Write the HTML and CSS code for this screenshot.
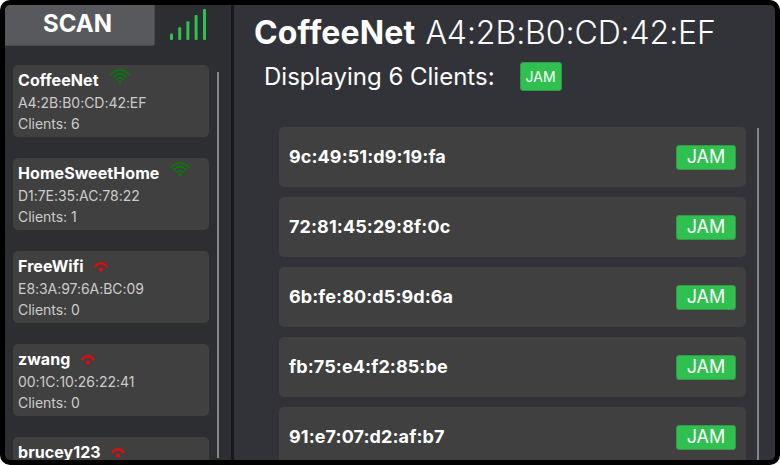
FILE: index.html
```html
<!DOCTYPE html>
<html lang="en">
<head>
<meta charset="utf-8">
<title>Wifi scanner</title>
<link rel="stylesheet" href="styles.css">
</head>
<body>
<svg class="defs" width="0" height="0">
  <symbol id="wifi-strong" viewBox="0 0 20 15">
    <g fill="none" stroke="currentColor" stroke-width="1.5">
      <path d="M.5 6.200C5.500-.8 14.500-.8 19.500 6.200"/>
      <path d="M3.500 8.600C7 3.600 13 3.600 16.500 8.600"/>
      <path d="M6.300 11C8.200 8 11.800 8 13.700 11"/>
    </g>
    <circle cx="10" cy="12.800" r="1.500" fill="currentColor"/>
  </symbol>
  <symbol id="wifi-weak" viewBox="0 0 14 10">
    <path d="M.8 5.100C4-.2 10-.2 13.200 5.100" fill="none" stroke="currentColor" stroke-width="2"/>
    <circle cx="7" cy="7.600" r="2" fill="currentColor"/>
  </symbol>
</svg>
<div class="window">
  <aside class="sidebar">
    <header class="toolbar">
      <button class="scan">SCAN</button>
      <svg class="signal" width="37" height="32" viewBox="0 0 37 32" fill="#2fc04f">
        <rect x="0" y="24.500" width="3" height="6.500" rx="1"/>
        <rect x="8.200" y="18.300" width="3" height="12.700" rx="1"/>
        <rect x="16.400" y="12.300" width="3" height="18.700" rx="1"/>
        <rect x="24.600" y="6" width="3" height="25" rx="1"/>
        <rect x="33" y="0" width="3" height="31" rx="1"/>
      </svg>
    </header>
    <div class="networks">
      <div class="network">
        <div class="name">CoffeeNet<svg class="strong"><use href="#wifi-strong"/></svg></div>
        <div>A4:2B:B0:CD:42:EF</div><div>Clients: 6</div>
      </div>
      <div class="network">
        <div class="name">HomeSweetHome<svg class="strong"><use href="#wifi-strong"/></svg></div>
        <div>D1:7E:35:AC:78:22</div><div>Clients: 1</div>
      </div>
      <div class="network">
        <div class="name">FreeWifi<svg class="weak"><use href="#wifi-weak"/></svg></div>
        <div>E8:3A:97:6A:BC:09</div><div>Clients: 0</div>
      </div>
      <div class="network">
        <div class="name">zwang<svg class="weak"><use href="#wifi-weak"/></svg></div>
        <div>00:1C:10:26:22:41</div><div>Clients: 0</div>
      </div>
      <div class="network">
        <div class="name">brucey123<svg class="weak"><use href="#wifi-weak"/></svg></div>
      </div>
    </div>
    <div class="scrollbar"></div>
  </aside>
  <main class="details">
    <h1><b>CoffeeNet</b> <span>A4:2B:B0:CD:42:EF</span></h1>
    <div class="summary"><span>Displaying 6 Clients:</span><button class="jam jam-all">JAM</button></div>
    <div class="list">
      <div class="clients">
        <div class="client"><b>9c:49:51:d9:19:fa</b><button class="jam">JAM</button></div>
        <div class="client"><b>72:81:45:29:8f:0c</b><button class="jam">JAM</button></div>
        <div class="client"><b>6b:fe:80:d5:9d:6a</b><button class="jam">JAM</button></div>
        <div class="client"><b>fb:75:e4:f2:85:be</b><button class="jam">JAM</button></div>
        <div class="client"><b>91:e7:07:d2:af:b7</b><button class="jam">JAM</button></div>
      </div>
      <div class="scrollbar"></div>
    </div>
  </main>
</div>
</body>
</html>
```
FILE: styles.css
```css
* { box-sizing: border-box; }
body { margin: 0; background: #fff; color: #fff; font-family: Inter, sans-serif; }
button { padding: 0; color: #fff; font-family: inherit; }
.defs { display: block; height: 0; }
.window { display: flex; width: 780px; height: 465px; border: 5px solid #000; border-radius: 10px; background: #000; overflow: hidden; }
.sidebar {
  width: 229px; height: 455px; overflow: hidden;
  display: grid; grid-template: 60px 1fr / 1fr 2px; column-gap: 8px;
  padding-right: 12px; padding-left: 8px;
  border-right: 3px solid #19191c; background: #2d2e32; border-radius: 4px 0 0 4px;
}
.toolbar { grid-column: 1 / 3; display: flex; align-items: flex-start; margin-left: -8px; }
.scan {
  width: 150px; height: 41px; padding-right: 4px; padding-bottom: 3px; flex: none;
  border: 1px solid #4a4a4d; border-width: 0 1px 1px 0; border-radius: 0 0 3px 0;
  background: #58595c; font-size: 24px; font-weight: 700;
}
.signal { margin: 4px 0 0 15px; flex: none; }
.network { height: 72px; margin-bottom: 21px; padding: 4px 5px; border-radius: 5px; background: #404040; color: #ccc; font-size: 14px; line-height: 21px; letter-spacing: -.04px; }
.name { display: flex; height: 23px; color: #fff; font-size: 16px; font-weight: 700; line-height: 22px; letter-spacing: .06px; }
.strong { width: 20px; height: 15px; margin-left: 11px; color: #008000; }
.weak { width: 14px; height: 10px; margin: 7px 0 0 10.4px; color: #f00; }
.scrollbar { width: 2px; background: #858585; }
.sidebar .scrollbar { height: 386px; margin-top: 7px; }
.details { flex: 1; height: 455px; overflow: hidden; padding-left: 20px; background: #323338; border-radius: 0 4px 4px 0; }
h1 { margin: 8px 0 0; height: 41px; font-size: 32px; font-weight: 300; line-height: 40px; white-space: nowrap; }
h1 b { font-weight: 700; letter-spacing: .15px; }
h1 span { margin-left: 1px; letter-spacing: -.08px; }
.summary { display: flex; height: 73px; margin-left: 10px; padding-top: 8px; font-size: 24px; line-height: 30px; white-space: nowrap; }
.jam { width: 60px; height: 25px; border: 1px solid #36964a; border-radius: 3px; background: #2fc04f; font-size: 18px; line-height: 22px; flex: none; }
.jam-all { width: 42px; height: 29px; margin-left: 25px; font-size: 14px; }
.list { display: flex; gap: 11px; margin-left: 25px; }
.clients { width: 467px; }
.client { display: flex; align-items: center; justify-content: space-between; height: 60px; margin-bottom: 10px; padding: 0 10px; border-radius: 5px; background: #404040; font-size: 18px; }
.client b { letter-spacing: .1px; line-height: 22px; }
.list .scrollbar { height: 332px; margin-top: 1px; }
```
